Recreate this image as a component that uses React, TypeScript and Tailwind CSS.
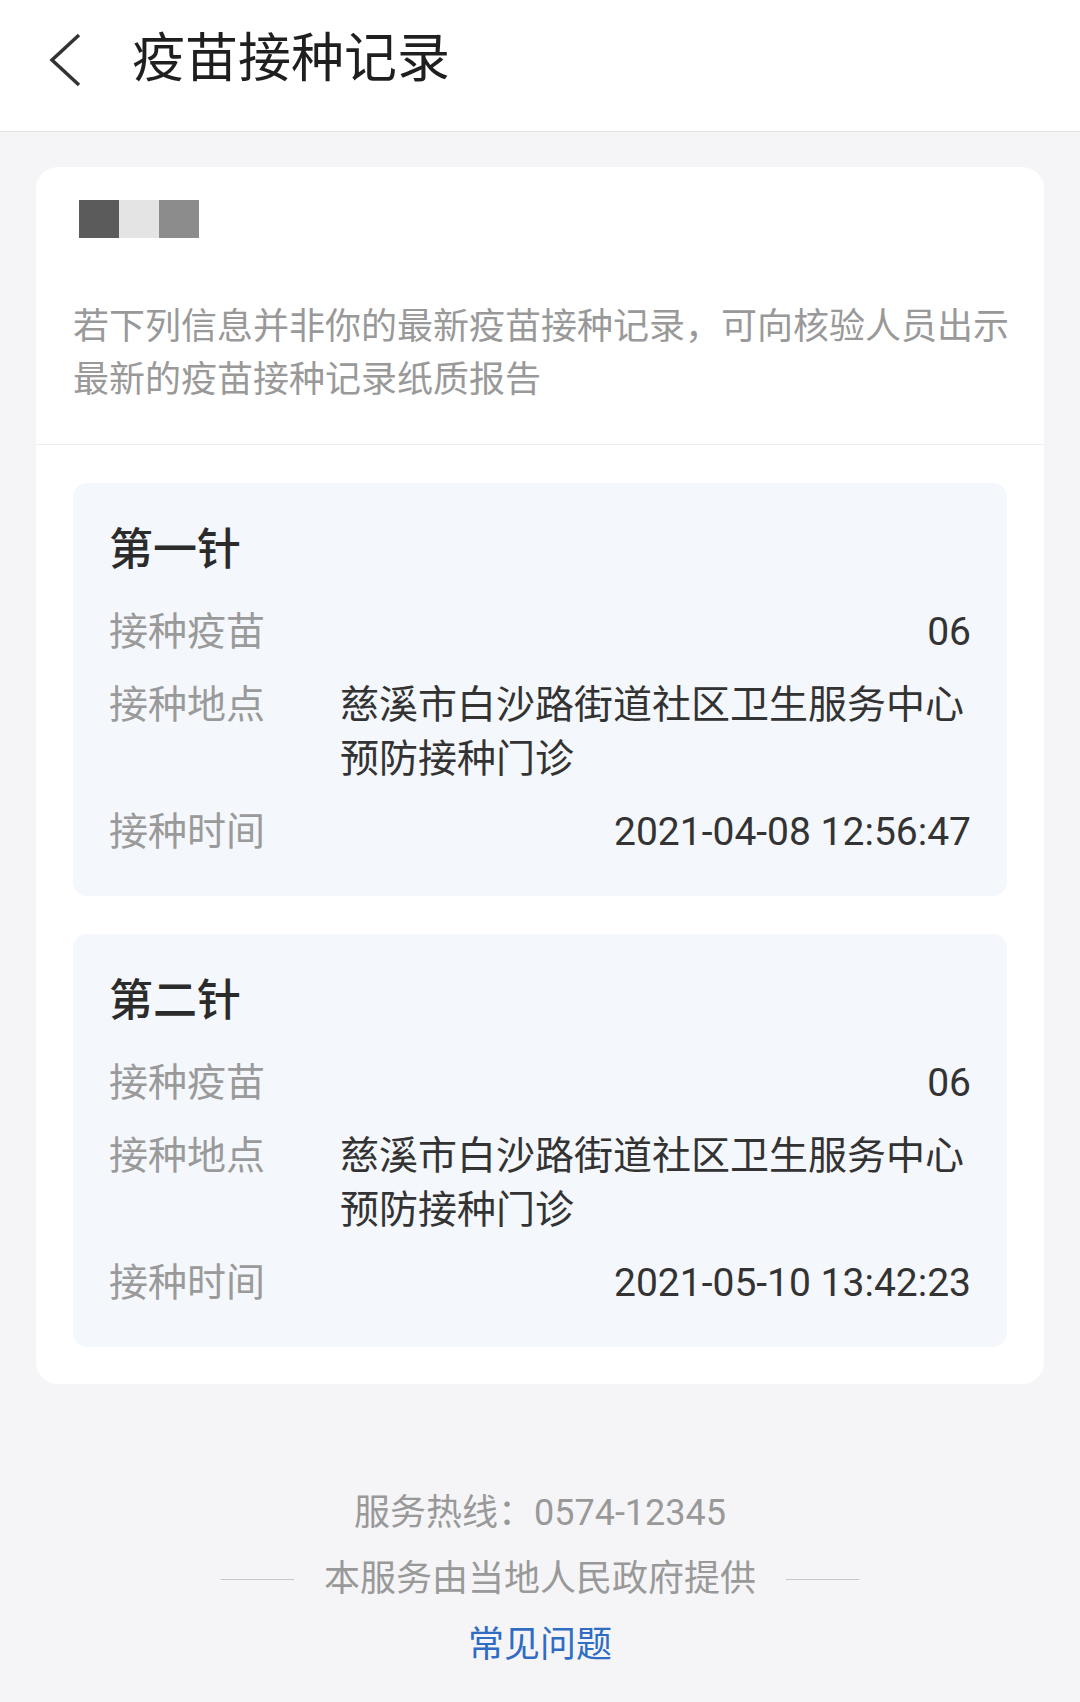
const doses = [
  {
    title: "第一针",
    vaccine: "06",
    place: "慈溪市白沙路街道社区卫生服务中心预防接种门诊",
    time: "2021-04-08 12:56:47",
  },
  {
    title: "第二针",
    vaccine: "06",
    place: "慈溪市白沙路街道社区卫生服务中心预防接种门诊",
    time: "2021-05-10 13:42:23",
  },
];

function Row({ label, value }: { label: string; value: string }) {
  return (
    <div className="flex text-[39px] leading-[54px]">
      <div className="w-[231px] shrink-0 text-[#9a9a9a]">{label}</div>
      <div className="flex-1 text-right text-[#333]">
        <span className="inline-block text-left">{value}</span>
      </div>
    </div>
  );
}

function DoseCard({ dose }: { dose: (typeof doses)[number] }) {
  return (
    <div className="rounded-[14px] bg-[#f4f7fb] px-[36px] pt-[37px] pb-[37px]">
      <h2 className="text-[44px] leading-[60px] font-medium text-[#2b2b2b]">{dose.title}</h2>
      <div className="mt-[25px] flex flex-col gap-[19px]">
        <Row label="接种疫苗" value={dose.vaccine} />
        <Row label="接种地点" value={dose.place} />
        <Row label="接种时间" value={dose.time} />
      </div>
    </div>
  );
}

export default function App() {
  return (
    <div className="min-h-screen bg-[#f5f5f7] font-[Roboto,'Noto_Sans_CJK_SC',sans-serif] pb-[24px]">
      {/* header */}
      <div className="flex h-[132px] items-center border-b border-[#e4e4e4] bg-white pb-[12px] pl-[48px]">
        <svg width="34" height="56" viewBox="0 0 34 56" fill="none">
          <polyline points="31,3 4,28 31,53" stroke="#333" strokeWidth="3.5" strokeLinejoin="miter" />
        </svg>
        <h1 className="ml-[50px] text-[53px] leading-none text-[#1f1f1f]">疫苗接种记录</h1>
      </div>

      {/* main card */}
      <div className="mx-[36px] mt-[35px] rounded-[22px] bg-white">
        <div className="px-[37px] pt-[33px] pb-[37px]">
          <div className="ml-[6px] flex h-[38px]">
            <div className="w-[40px] bg-[#5b5b5b]" />
            <div className="w-[40px] bg-[#e4e4e4]" />
            <div className="w-[40px] bg-[#8c8c8c]" />
          </div>
          <p className="mt-[63px] text-[36px] leading-[53px] text-[#999]">
            <span className="block whitespace-nowrap text-justify [text-align-last:justify]">
              若下列信息并非你的最新疫苗接种记录，可向核验人员出示
            </span>
            <span className="block">最新的疫苗接种记录纸质报告</span>
          </p>
        </div>
        <div className="flex flex-col gap-[38px] border-t border-[#eeeeee] px-[37px] pt-[38px] pb-[37px]">
          {doses.map((d) => (
            <DoseCard key={d.title} dose={d} />
          ))}
        </div>
      </div>

      {/* footer */}
      <div className="mt-[96px] flex flex-col items-center text-[36px] leading-[66px] text-[#999]">
        <div>服务热线：0574-12345</div>
        <div className="flex items-center gap-[30px]">
          <div className="h-px w-[73px] bg-[#c8c8c8]" />
          <span>本服务由当地人民政府提供</span>
          <div className="h-px w-[73px] bg-[#c8c8c8]" />
        </div>
        <div className="text-[#2f6cc4]">常见问题</div>
      </div>
    </div>
  );
}
